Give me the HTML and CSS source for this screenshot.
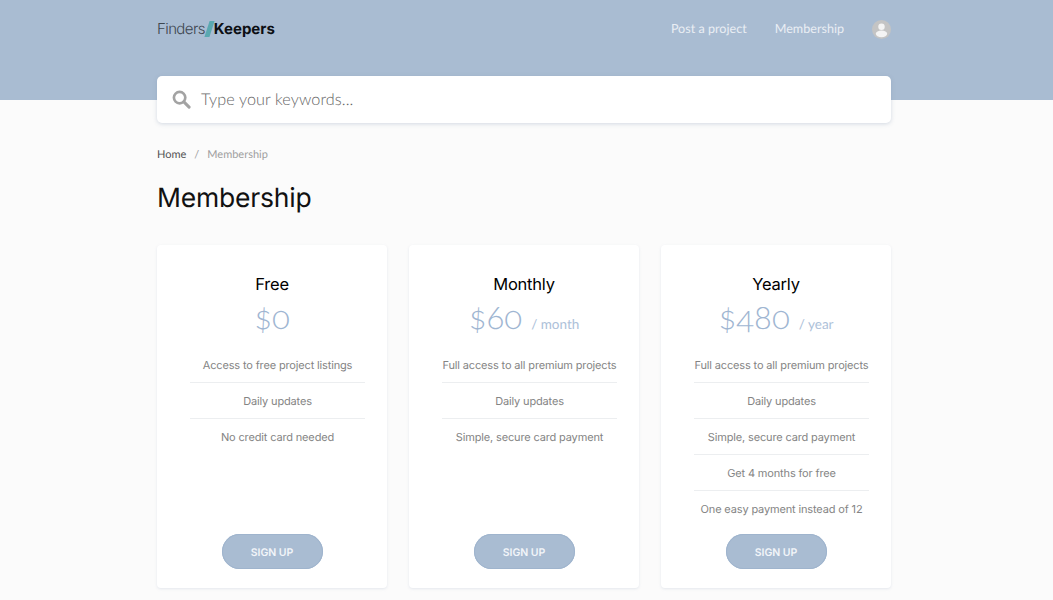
FILE: index.html
```html
<!DOCTYPE html>
<html lang="en">
<head>
<meta charset="utf-8">
<title>Membership</title>
<link rel="stylesheet" href="styles.css">
</head>
<body>
<header class="hero">
  <div class="wrap topbar">
    <a class="logo" href="#"><span class="logo-a">Finders</span><span class="logo-slash"></span><span class="logo-b">Keepers</span></a>
    <nav class="nav">
      <a href="#">Post a project</a>
      <a href="#">Membership</a>
      <span class="avatar">
        <svg viewBox="0 0 20 20" width="19" height="19"><circle cx="10" cy="10" r="10" fill="#c4c4c4"/><circle cx="10" cy="7" r="3.4" fill="#f4f4f4"/><ellipse cx="10" cy="14.6" rx="6" ry="3.6" fill="#f4f4f4"/></svg>
      </span>
    </nav>
  </div>
</header>
<main class="wrap">
  <div class="search">
    <svg class="search-icon" viewBox="0 0 20 20" width="19" height="19"><circle cx="8" cy="8" r="6" fill="none" stroke="#a3a3a3" stroke-width="2.8"/><path d="M12.5 12.5L18 18" stroke="#a3a3a3" stroke-width="3.2" stroke-linecap="round"/></svg>
    <span class="search-text">Type your keywords...</span>
  </div>
  <div class="crumbs"><a href="#">Home</a><span class="sep">/</span><span class="cur">Membership</span></div>
  <h1>Membership</h1>
  <section class="plans">
    <article class="plan">
      <h2>Free</h2>
      <div class="price"><span class="amount">$0</span></div>
      <ul>
        <li>Access to free project listings</li>
        <li>Daily updates</li>
        <li>No credit card needed</li>
      </ul>
      <a class="btn" href="#">SIGN UP</a>
    </article>
    <article class="plan">
      <h2>Monthly</h2>
      <div class="price"><span class="amount">$60</span><span class="per">/ month</span></div>
      <ul>
        <li>Full access to all premium projects</li>
        <li>Daily updates</li>
        <li>Simple, secure card payment</li>
      </ul>
      <a class="btn" href="#">SIGN UP</a>
    </article>
    <article class="plan">
      <h2>Yearly</h2>
      <div class="price"><span class="amount">$480</span><span class="per">/ year</span></div>
      <ul>
        <li>Full access to all premium projects</li>
        <li>Daily updates</li>
        <li>Simple, secure card payment</li>
        <li>Get 4 months for free</li>
        <li>One easy payment instead of 12</li>
      </ul>
      <a class="btn" href="#">SIGN UP</a>
    </article>
  </section>
</main>
</body>
</html>
```
FILE: styles.css
```css
* { box-sizing: border-box; }
html, body { margin: 0; padding: 0; }
body { background: #fbfbfb; font-family: "Inter", "Liberation Sans", sans-serif; color: #777; height: 600px; overflow: hidden; text-rendering: geometricPrecision; }
a { text-decoration: none; color: inherit; }
.wrap { width: 734px; margin-left: 157px; }
.hero { height: 100px; background: #a9bcd2; }
.topbar { display: flex; justify-content: space-between; align-items: center; padding-top: 19px; height: 39px; }
.logo { display: flex; align-items: center; font-size: 15px; line-height: 20px; }
.logo-a { color: #3d4650; font-weight: 300; letter-spacing: -0.6px; }
.logo-b { color: #0c0f14; font-weight: 700; }
.logo-slash { width: 5px; height: 16px; background: #5aa8b0; transform: skewX(-18deg); margin: 0 2px 1px 2px; }
.nav { display: flex; align-items: center; font-family: "Lato", sans-serif; font-weight: 400; font-size: 12.6px; color: #e9eef4; }
.nav a { padding-bottom: 1px; }
.nav a:nth-child(1) { margin-right: 28px; }
.nav a:nth-child(2) { margin-right: 28px; }
.avatar { display: block; width: 19px; height: 19px; }
.avatar svg { display: block; }
.search { margin-top: -24px; height: 47px; background: #fff; border-radius: 5px; box-shadow: 0 1px 4px rgba(120,140,170,.3); display: flex; align-items: center; padding: 0 0 1px 15px; }
.search-icon { margin-right: 10px; }
.search-text { font-family: "Lato", sans-serif; font-size: 16.2px; font-weight: 300; color: #666; letter-spacing: .1px; }
.crumbs { margin-top: 25px; font-family: "Lato", sans-serif; font-size: 11px; line-height: 14px; color: #a0a0a0; }
.crumbs a { color: #555; }
.sep { margin: 0 8px; }
h1 { margin: 16px 0 0; font-size: 26.5px; line-height: 40px; font-weight: 400; color: #111; letter-spacing: -0.2px; }
.plans { display: flex; gap: 22px; margin-top: 27px; }
.plan { width: 230px; height: 343px; background: #fff; border-radius: 4px; box-shadow: 0 1px 3px rgba(150,165,190,.22); padding: 28px 22px 19px 33px; display: flex; flex-direction: column; }
h2 { margin: 0 0 0 -11px; text-align: center; font-size: 16.5px; line-height: 22px; font-weight: 400; color: #000; letter-spacing: -0.2px; }
.price { margin: 2px 0 0 -11px; text-align: center; color: #9fb6d2; height: 42px; line-height: 40px; white-space: nowrap; }
.amount { font-family: "Lato", sans-serif; font-weight: 300; font-size: 33px; font-variant-numeric: oldstyle-nums; }
.per { font-family: "Lato", sans-serif; font-weight: 400; font-size: 13.5px; margin-left: 9px; color: #adc1d9; }
ul { list-style: none; margin: 8px 0 0; padding: 0; flex: 1; }
li { height: 36px; line-height: 37px; text-align: center; font-size: 11px; letter-spacing: -0.15px; color: #848484; border-bottom: 1px solid #eceef0; white-space: nowrap; }
li:last-child { border-bottom: 0; }
.btn { align-self: center; margin-left: -11px; width: 101px; height: 35px; line-height: 37px; border-radius: 18px; background: #a9bcd2; box-shadow: inset 0 0 0 1px #9fb4cd; color: #f2f5f9; text-align: center; font-size: 10.5px; font-weight: 600; }
```
